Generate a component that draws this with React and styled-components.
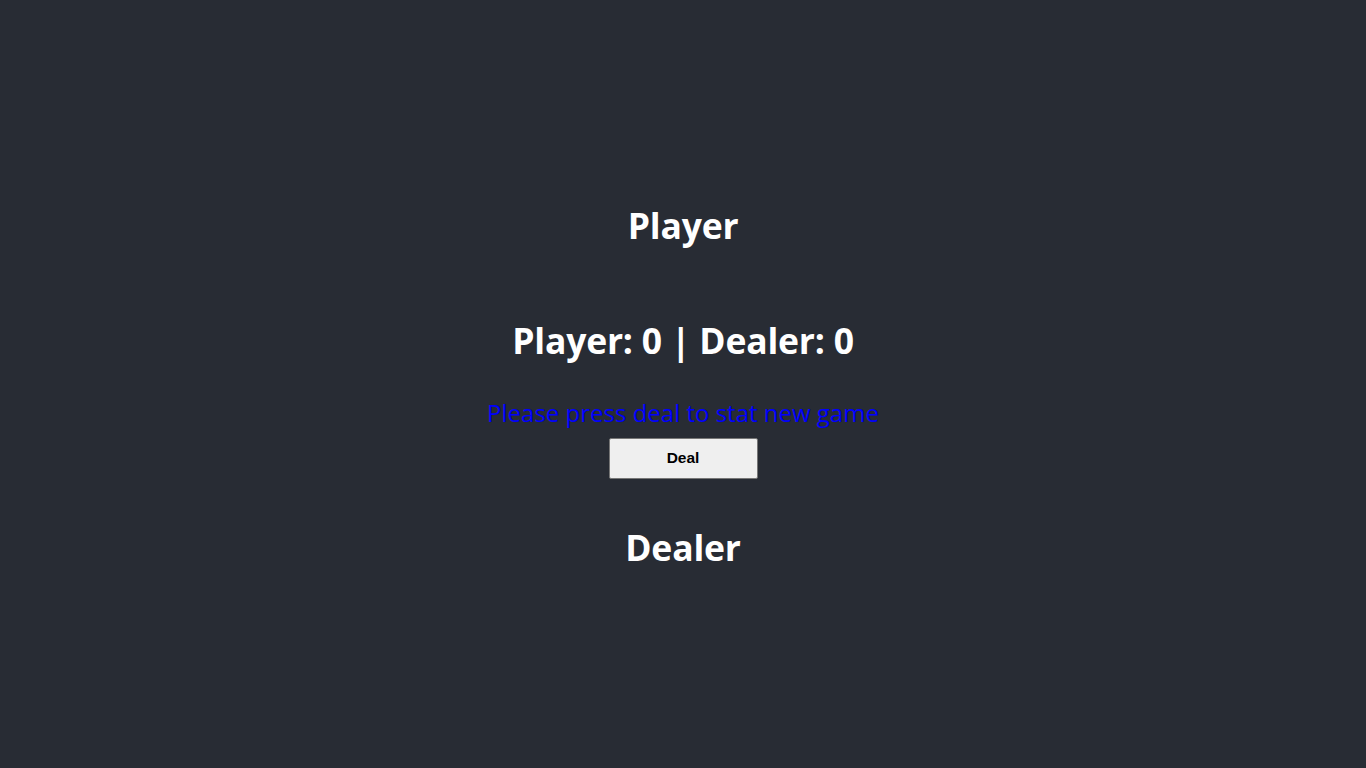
import React from "react"
import styled, { createGlobalStyle } from "styled-components"

const GlobalStyle = createGlobalStyle`
  body {
    margin: 0;
    background: #282c34;
    font-family: "Open Sans", "Noto Sans", sans-serif;
  }
`

const Table = styled.div`
  min-height: 100vh;
  box-sizing: border-box;
  padding-top: 3px;
  display: flex;
  flex-direction: column;
  align-items: center;
  justify-content: center;
  color: white;
  text-align: center;
`

const Heading = styled.h1`
  margin: 0;
  font: 700 35.5px / 42px "Open Sans", sans-serif;
  letter-spacing: -0.2px;
`

const Hand = styled.div`
  height: ${(p) => p.$gap}px;
`

const Message = styled.p`
  margin: 37px 0 10px;
  font: 400 24px / 30px "Open Sans", sans-serif;
  color: #0000ff;
`

const DealButton = styled.button`
  width: 149px;
  height: 41px;
  background: #efefef;
  border: 1px solid #767676;
  border-radius: 2px;
  font: 700 15.5px "Liberation Sans", Arial, sans-serif;
  color: black;
  cursor: pointer;
`

export default function App() {
  return (
    <>
      <GlobalStyle />
      <Table>
        <Heading>Player</Heading>
        <Hand $gap={73} />
        <Heading>Player: 0 | Dealer: 0</Heading>
        <Message>Please press deal to stat new game</Message>
        <DealButton>Deal</DealButton>
        <Hand $gap={47} />
        <Heading>Dealer</Heading>
      </Table>
    </>
  )
}
